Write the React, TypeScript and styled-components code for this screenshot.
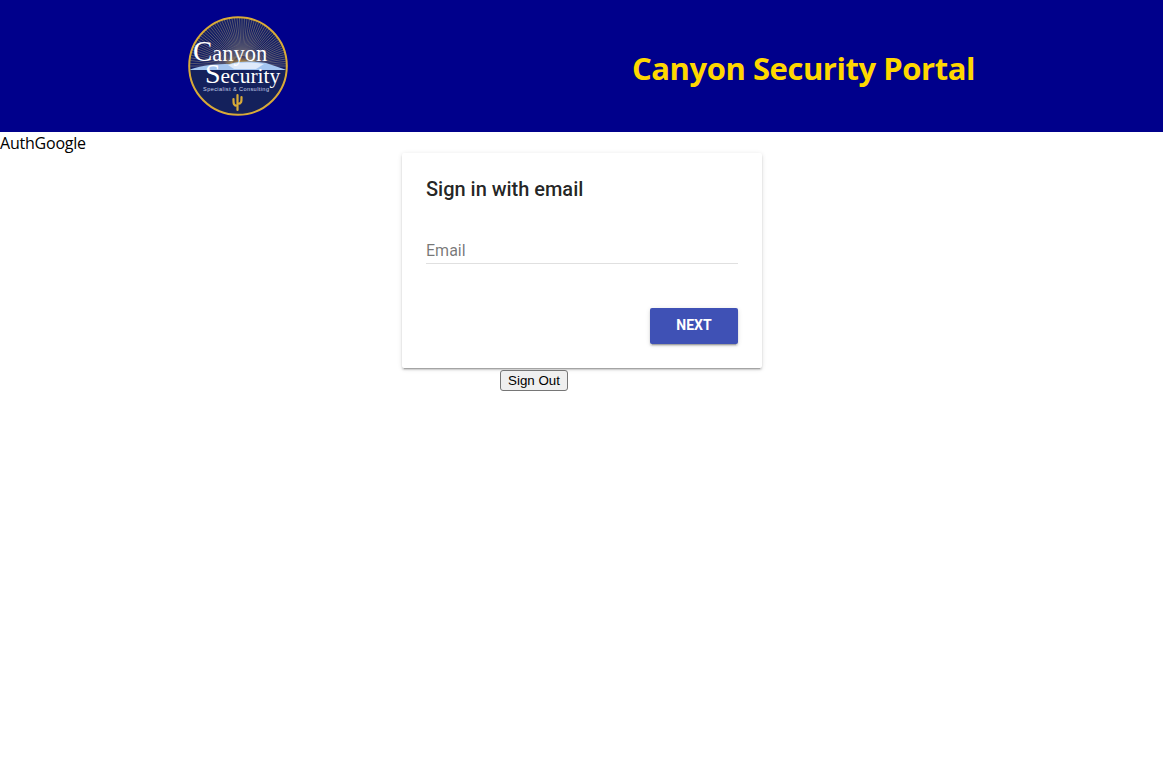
import React from "react";
import styled, { createGlobalStyle } from "styled-components";

const Global = createGlobalStyle`
  html, body { margin: 0; padding: 0; background: #fff; }
  body { font-family: "Open Sans", "Noto Sans", sans-serif; font-size: 16px; color: #000; }
`;

const Header = styled.header`
  height: 132px;
  background: #00008b;
  display: flex;
  align-items: flex-start;
  padding: 16px 0 0 188px;
  box-sizing: border-box;
`;

const LogoWrap = styled.div`
  width: 100px;
  height: 100px;
  flex: none;
`;

const Title = styled.h1`
  margin: 30px 0 0 344px;
  font-family: "Open Sans", "Noto Sans", sans-serif;
  font-size: 31px;
  line-height: 44px;
  font-weight: 700;
  letter-spacing: -0.45px;
  color: #ffd700;
  white-space: nowrap;
`;

const AuthLabel = styled.div`
  height: 21px;
  line-height: 23px;
  font-size: 16px;
  letter-spacing: -0.22px;
  color: #000;
`;

const Card = styled.form`
  width: 360px;
  height: 215px;
  box-sizing: border-box;
  margin: 0 0 0 402px;
  padding: 24px 24px 0;
  background: #fff;
  border-radius: 2px;
  box-shadow: 0 2px 2px 0 rgba(0,0,0,.14), 0 3px 1px -2px rgba(0,0,0,.2), 0 1px 5px 0 rgba(0,0,0,.12);
  display: flex;
  flex-direction: column;
  font-family: Roboto, sans-serif;
`;

const CardTitle = styled.h2`
  margin: 0;
  font-size: 20px;
  line-height: 24px;
  font-weight: 500;
  letter-spacing: -0.02px;
  color: rgba(0,0,0,.87);
`;

const Field = styled.label`
  display: block;
  margin-top: 36px;
  height: 27px;
  box-sizing: border-box;
  border-bottom: 1px solid rgba(0,0,0,.12);
  font-size: 16px;
  line-height: 28px;
  color: rgba(0,0,0,.54);
`;

const Actions = styled.div`
  display: flex;
  justify-content: flex-end;
  margin-top: 44px;
`;

const NextButton = styled.button`
  width: 88px;
  height: 36px;
  border: 0;
  border-radius: 2px;
  background: #3f51b5;
  color: #fff;
  font-family: Roboto, sans-serif;
  font-size: 14px;
  line-height: 34px;
  font-weight: 700;
  padding: 0 0 2px;
  box-shadow: 0 2px 2px 0 rgba(0,0,0,.14), 0 3px 1px -2px rgba(0,0,0,.2), 0 1px 5px 0 rgba(0,0,0,.12);
`;

const SignOutRow = styled.div`
  padding: 2px 0 0 500px;
`;

const SignOut = styled.button`
  display: block;
  width: 68px;
  height: 21px;
  padding: 0;
  box-sizing: border-box;
  border: 1px solid #767676;
  border-radius: 3px;
  background: #efefef;
  color: #000;
  font-family: "Liberation Sans", Arial, sans-serif;
  font-size: 13.33px;
`;

const rays = Array.from({ length: 61 }, (_, i) => {
  const a = Math.PI + (i / 60) * Math.PI;
  return { x1: 54 + 10 * Math.cos(a), y1: 50 + 10 * Math.sin(a), x2: 54 + 56 * Math.cos(a), y2: 50 + 56 * Math.sin(a) };
});

const Logo = () => (
  <svg width="100" height="100" viewBox="0 0 100 100" role="img" aria-label="Canyon Security logo">
    <defs>
      <clipPath id="disc"><circle cx="50" cy="50" r="48" /></clipPath>
      <radialGradient id="sun" cx="50%" cy="70%" r="55%">
        <stop offset="0" stopColor="#eab23a" />
        <stop offset="1" stopColor="#eab23a" stopOpacity="0" />
      </radialGradient>
    </defs>
    <circle cx="50" cy="50" r="49" fill="#14215c" />
    <g clipPath="url(#disc)">
      <rect x="0" y="0" width="100" height="56" fill="#141f66" />
      {rays.map((r, i) => (
        <line key={i} x1={r.x1} y1={r.y1} x2={r.x2} y2={r.y2} stroke="#b9ab82" strokeWidth="0.6" opacity="0.7" />
      ))}
      <ellipse cx="54" cy="45" rx="17" ry="9" fill="url(#sun)" />
      <path d="M1 54 C 14 49, 28 48, 42 48 C 50 45, 66 45, 78 47 L 99 54 Z" fill="#a5c6f0" />
      <path d="M40 49 C 50 46, 64 46, 76 48 L 68 53 L 46 53 Z" fill="#dfeafa" />
      <rect x="0" y="54" width="100" height="46" fill="#14215c" />
    </g>
    <circle cx="50" cy="50" r="48.8" fill="none" stroke="#d8aa38" strokeWidth="2" />
    <text x="5" y="45" fontFamily="'Liberation Serif', serif" fontSize="22.5" fill="#fff">
      <tspan fontSize="29">C</tspan>
      <tspan>anyon</tspan>
    </text>
    <text x="17" y="67" fontFamily="'Liberation Serif', serif" fontSize="21.5" fill="#fff">
      <tspan fontSize="28">S</tspan>
      <tspan>ecurity</tspan>
    </text>
    <text x="15" y="75" fontFamily="'Liberation Sans', sans-serif" fontSize="5.6" fill="#c9d2ea" textLength="66">Specialist &amp; Consulting</text>
    <path d="M49.5 94 V 79 M49.5 90 C 45 90, 45.5 87, 45.5 83 M49.5 88 C 54 88, 53.5 85, 53.5 81" fill="none" stroke="#d8aa38" strokeWidth="2.2" strokeLinecap="round" />
  </svg>
);

export default function App() {
  return (
    <>
      <Global />
      <Header>
        <LogoWrap><Logo /></LogoWrap>
        <Title>Canyon Security Portal</Title>
      </Header>
      <AuthLabel>AuthGoogle</AuthLabel>
      <Card onSubmit={(e) => e.preventDefault()}>
        <CardTitle>Sign in with email</CardTitle>
        <Field>Email</Field>
        <Actions><NextButton type="submit">NEXT</NextButton></Actions>
      </Card>
      <SignOutRow><SignOut type="button">Sign Out</SignOut></SignOutRow>
    </>
  );
}
